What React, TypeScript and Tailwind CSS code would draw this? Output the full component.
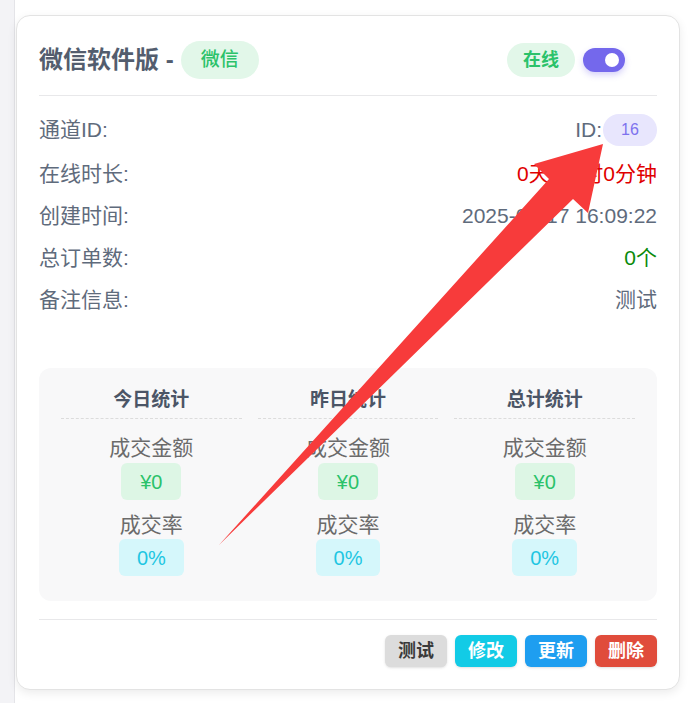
const font = { fontFamily: '"Liberation Sans", "Noto Sans CJK SC", sans-serif' };

const rows = [
  { label: "通道ID:", value: "", kind: "id" },
  { label: "在线时长:", value: "0天0小时0分钟", color: "text-[#e00000]" },
  { label: "创建时间:", value: "2025-06-17 16:09:22", color: "text-[#5f6b7c]" },
  { label: "总订单数:", value: "0个", color: "text-[#0a8a0a]" },
  { label: "备注信息:", value: "测试", color: "text-[#5f6b7c]" },
];

const stats = ["今日统计", "昨日统计", "总计统计"];

function StatColumn({ title }: { title: string }) {
  return (
    <div className="flex flex-col items-center">
      <div className="w-full text-center text-[19px] leading-6 font-bold text-[#4b5566] pb-[6px] border-b border-dashed border-[#dcdcdc]">
        {title}
      </div>
      <div className="mt-[15px] text-[21px] leading-7 text-[#6b6b6b]">成交金额</div>
      <div className="mt-px h-[37px] px-[19px] flex items-center rounded-md bg-[#ddf6e5] text-[20px] text-[#2bc26a]">
        ¥0
      </div>
      <div className="mt-[11px] text-[21px] leading-7 text-[#6b6b6b]">成交率</div>
      <div className="h-[37px] px-[18px] flex items-center rounded-md bg-[#d5f7fb] text-[20px] text-[#1ec6e2]">
        0%
      </div>
    </div>
  );
}

export default function App() {
  return (
    <div className="relative flex min-h-[703px] bg-white" style={font}>
      <div className="w-[15px] shrink-0 bg-[#f3f3f6] border-r border-[#e4e4e8]" />
      <div className="pt-[15px] pl-px">
        <div className="w-[664px] rounded-[14px] border border-[#e3e3e3] bg-white shadow-[0_3px_10px_rgba(0,0,0,0.08)] px-[22px] pt-[25px] pb-[22px]">
          <div className="flex items-center justify-between pb-4 border-b border-[#e8e8ea]">
            <div className="flex items-center">
              <span className="text-[24px] leading-8 font-bold text-[#535d6e]">微信软件版 -</span>
              <span className="ml-[7px] h-[38px] w-[78px] flex items-center justify-center rounded-full bg-[#e2f7e9] text-[19px] font-medium text-[#2bc26a]">
                微信
              </span>
            </div>
            <div className="flex items-center gap-2 mr-8">
              <span className="h-[34px] w-[68px] flex items-center justify-center rounded-full bg-[#e2f7e9] text-[18px] font-bold text-[#2bc26a]">
                在线
              </span>
              <div className="h-6 w-[42px] rounded-full bg-[#7468ec] flex items-center justify-end pr-[6px] shadow-[0_3px_6px_rgba(116,104,236,0.3)]">
                <div className="h-[14px] w-[14px] rounded-full bg-white" />
              </div>
            </div>
          </div>

          <div className="pt-[18px] flex flex-col gap-[14px]">
            {rows.map((r) =>
              r.kind === "id" ? (
                <div key={r.label} className="flex items-center justify-between h-8 text-[21px] text-[#5f6b7c]">
                  <span>{r.label}</span>
                  <div className="flex items-center">
                    <span>ID:</span>
                    <span className="ml-px h-8 w-[54px] flex items-center justify-center rounded-full bg-[#e8e6fd] text-[16px] text-[#7d72ee]">
                      16
                    </span>
                  </div>
                </div>
              ) : (
                <div key={r.label} className="flex items-center justify-between h-7 text-[21px]">
                  <span className="text-[#5f6b7c]">{r.label}</span>
                  <span className={r.color}>{r.value}</span>
                </div>
              )
            )}
          </div>

          <div className="mt-[54px] rounded-xl bg-[#f8f8f9] px-[22px] pt-5 pb-[25px] grid grid-cols-3 gap-4">
            {stats.map((s) => (
              <StatColumn key={s} title={s} />
            ))}
          </div>

          <div className="mt-[18px] pt-[15px] border-t border-[#e8e8ea] flex justify-end gap-2">
            <button className="h-8 w-[62px] rounded-md bg-[#dcdcdc] text-[18px] font-semibold text-[#3a3a3a] shadow-sm">测试</button>
            <button className="h-8 w-[62px] rounded-md bg-[#12cbe6] text-[18px] font-bold text-white shadow-sm">修改</button>
            <button className="h-8 w-[62px] rounded-md bg-[#1e9ef0] text-[18px] font-bold text-white shadow-sm">更新</button>
            <button className="h-8 w-[62px] rounded-md bg-[#e04c3b] text-[18px] font-bold text-white shadow-sm">删除</button>
          </div>
        </div>
      </div>

      <svg className="absolute left-0 top-0 pointer-events-none" width="695" height="703" viewBox="0 0 695 703">
        <polygon
          points="219,545 549,179 534,164 603,144 588,213 573,199"
          fill="#f73b3b"
        />
      </svg>
    </div>
  );
}
